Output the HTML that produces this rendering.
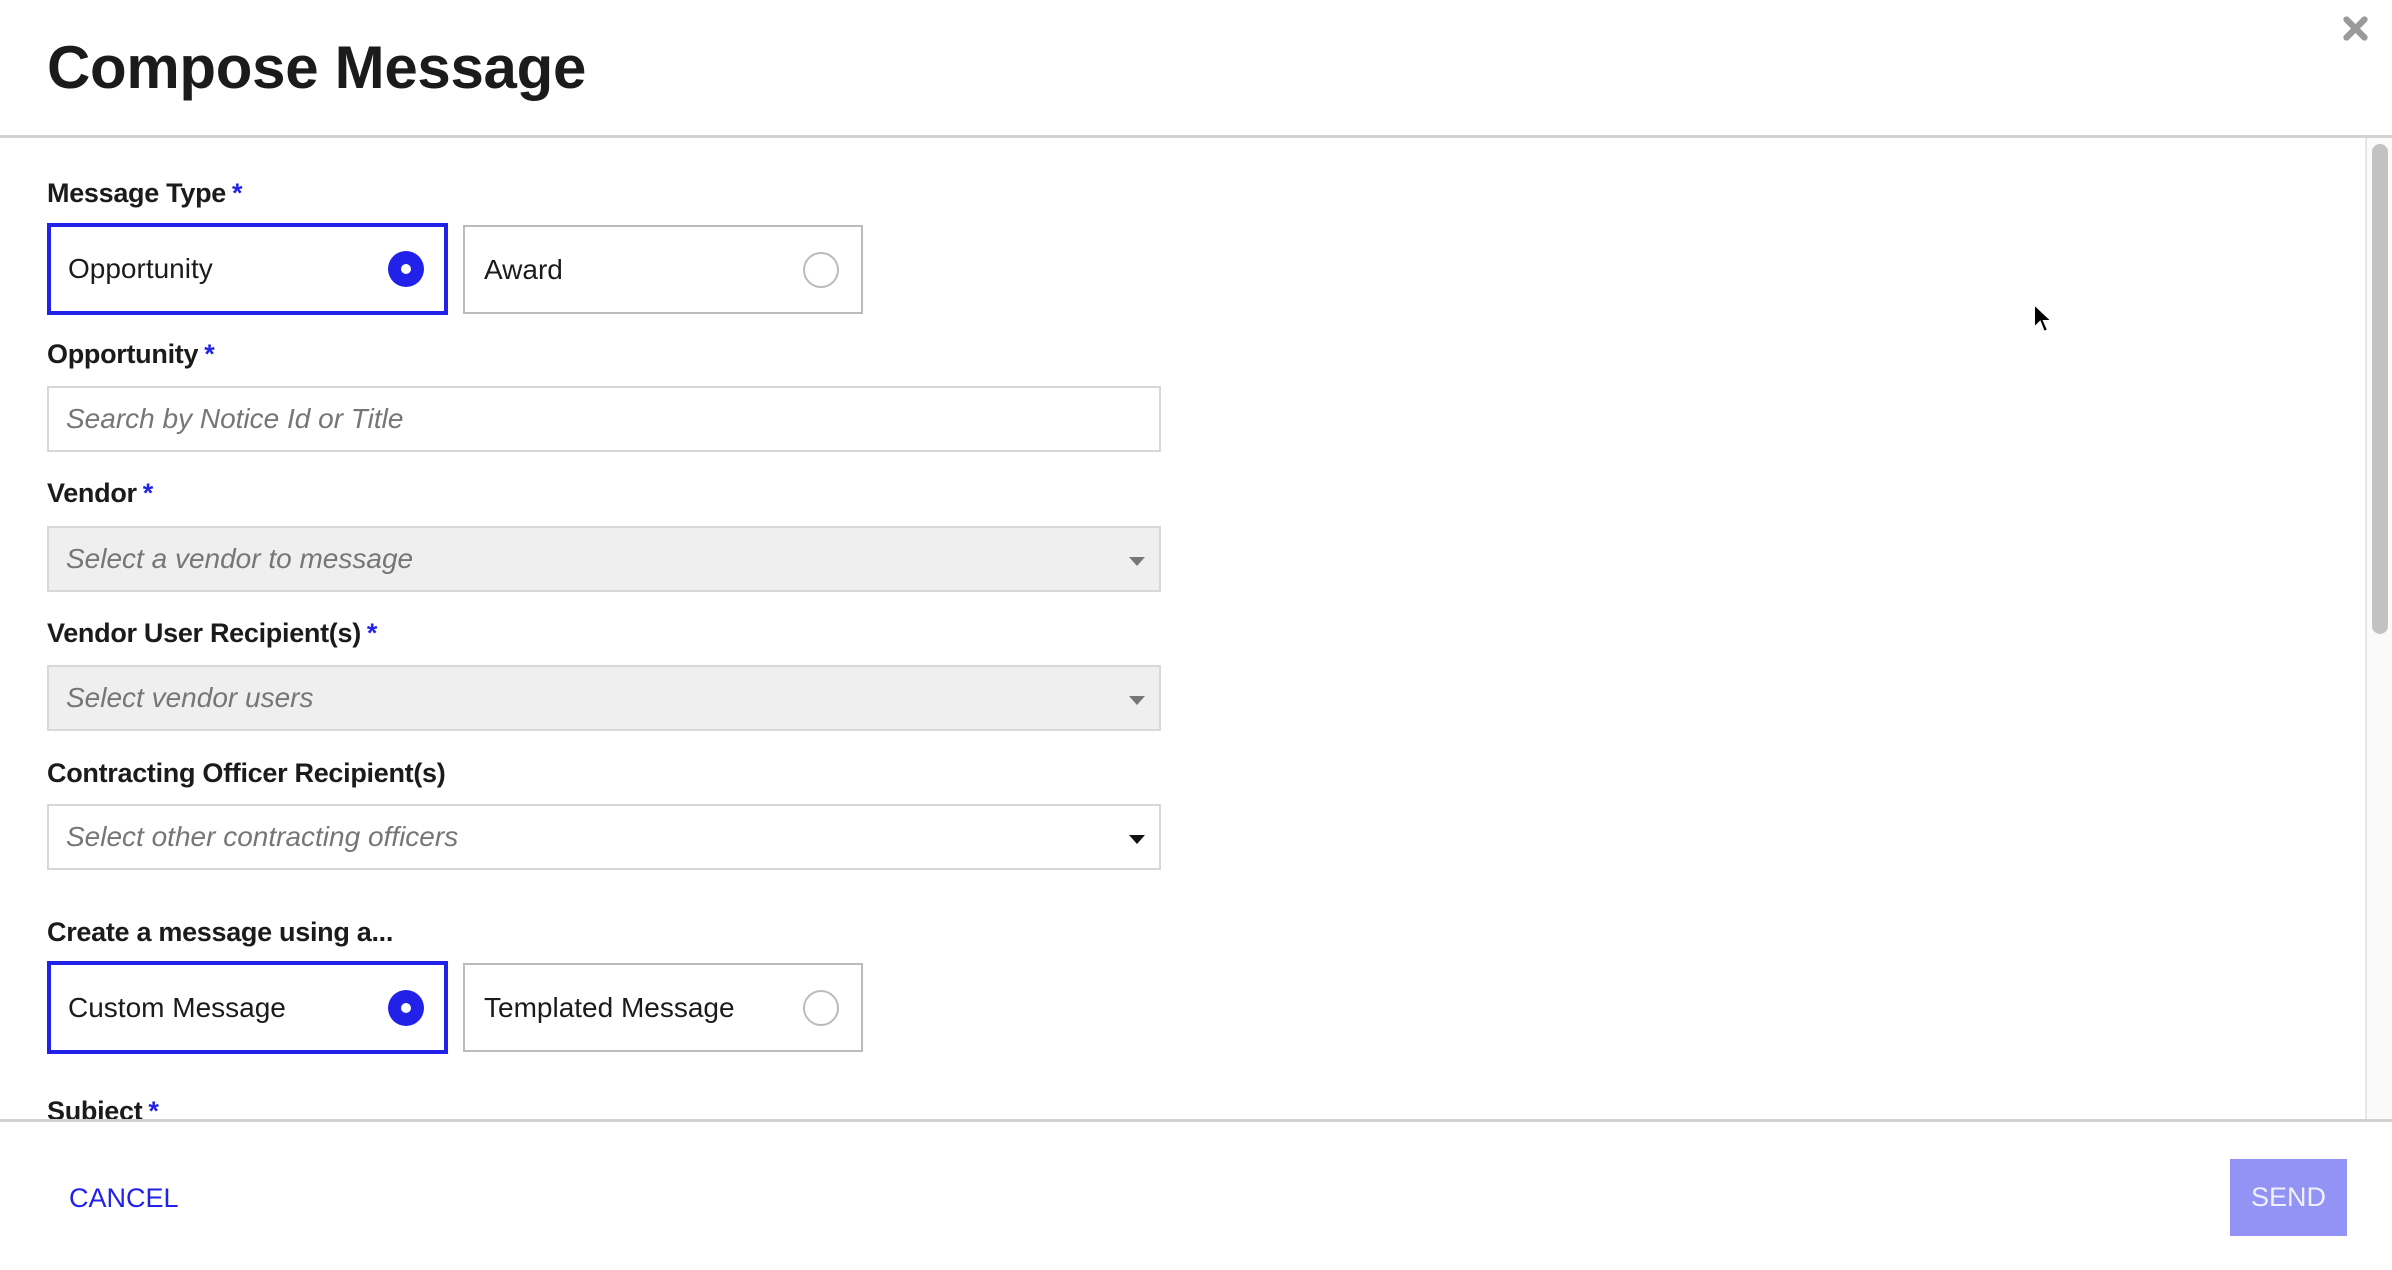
<!DOCTYPE html>
<html><head><meta charset="utf-8"><style>
*{box-sizing:border-box;margin:0;padding:0}
body{width:2392px;height:1270px;background:#fff;position:relative;overflow:hidden;font-family:"Liberation Sans",sans-serif;color:#1b1b1b}
.a{position:absolute}
h1{position:absolute;left:47px;top:33px;font-size:60px;font-weight:bold;letter-spacing:-0.3px;color:#1b1b1b}
.hr{position:absolute;left:0;width:2392px;height:3px;background:#d2d2d2}
.lbl{position:absolute;left:47px;font-size:27px;font-weight:bold;letter-spacing:-0.3px}
.lbl b{color:#2323e8;margin-left:6px}
.rb{position:absolute;border:2px solid #bbb;font-size:28px;padding-left:19px;display:flex;align-items:center}
.rb.on{border:4px solid #2121ea;padding-left:17px}
.c{position:absolute;right:22px;top:50%;width:36px;height:36px;margin-top:-18px;border-radius:50%;border:2px solid #bbb}
.on .c{background:#2121ea;border:none;right:20px}
.on .c:after{content:"";position:absolute;left:13px;top:13px;width:10px;height:10px;border-radius:50%;background:#fff}
.in{position:absolute;left:47px;width:1114px;height:66px;border:2px solid #d8d8d8;font-size:28px;font-style:italic;color:#767676;padding-left:17px;display:flex;align-items:center}
.g{background:#efefef}
.tri{position:absolute;right:14px;top:29px;width:0;height:0;border-left:8px solid transparent;border-right:8px solid transparent;border-top:9px solid #777}
</style></head><body>
<h1>Compose Message</h1>
<svg class="a" style="left:2342px;top:15px" width="27" height="27" viewBox="0 0 30 30"><path d="M5 5L25 25M25 5L5 25" stroke="#9a9a9a" stroke-width="7" stroke-linecap="round"/></svg>
<div class="hr" style="top:135px"></div>
<div class="a" style="left:2365px;top:138px;width:27px;height:982px;background:#fafafa;border-left:2px solid #e6e6e6"></div>
<div class="a" style="left:2372px;top:144px;width:16px;height:490px;background:#c2c2c2;border-radius:8px"></div>

<div class="lbl" style="top:178px">Message Type<b>*</b></div>
<div class="rb on" style="left:47px;top:223px;width:401px;height:92px">Opportunity<span class="c"></span></div>
<div class="rb" style="left:463px;top:225px;width:400px;height:89px">Award<span class="c"></span></div>

<div class="lbl" style="top:339px">Opportunity<b>*</b></div>
<div class="in" style="top:386px">Search by Notice Id or Title</div>

<div class="lbl" style="top:478px">Vendor<b>*</b></div>
<div class="in g" style="top:526px">Select a vendor to message<span class="tri"></span></div>

<div class="lbl" style="top:618px">Vendor User Recipient(s)<b>*</b></div>
<div class="in g" style="top:665px">Select vendor users<span class="tri"></span></div>

<div class="lbl" style="top:758px">Contracting Officer Recipient(s)</div>
<div class="in" style="top:804px">Select other contracting officers<span class="tri" style="border-top-color:#111"></span></div>

<div class="lbl" style="top:917px">Create a message using a...</div>
<div class="rb on" style="left:47px;top:961px;width:401px;height:93px">Custom Message<span class="c"></span></div>
<div class="rb" style="left:463px;top:963px;width:400px;height:89px">Templated Message<span class="c"></span></div>

<div class="lbl" style="top:1096px">Subject<b>*</b></div>
<div class="a" style="left:0;top:1120px;width:2392px;height:150px;background:#fff"></div>
<div class="hr" style="top:1119px"></div>
<div class="a" style="left:69px;top:1183px;font-size:27px;color:#2121ea;letter-spacing:0">CANCEL</div>
<div class="a" style="left:2230px;top:1159px;width:117px;height:77px;background:#9393f6;color:#f0f0ff;font-size:27px;display:flex;align-items:center;justify-content:center">SEND</div>
<svg class="a" style="left:2032px;top:302px" width="22" height="34" viewBox="0 0 22 34"><path d="M2 2L2 26L8 20L12 30L16 28L12 19L20 19Z" fill="#000" stroke="#fff" stroke-width="2"/></svg>
</body></html>
